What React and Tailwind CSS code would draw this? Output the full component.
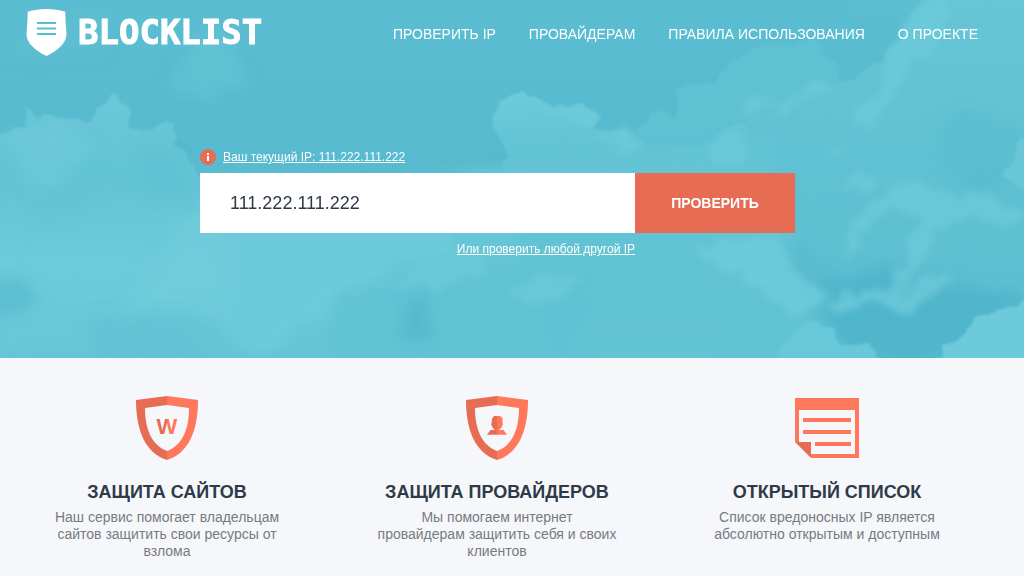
import React from "react";

const navLinks = [
  { label: "ПРОВЕРИТЬ IP", href: "#check" },
  { label: "ПРОВАЙДЕРАМ", href: "#providers" },
  { label: "ПРАВИЛА ИСПОЛЬЗОВАНИЯ", href: "#rules" },
  { label: "О ПРОЕКТЕ", href: "#about" },
];

function Clouds() {
  return (
    <svg
      className="col-start-1 row-start-1 w-full h-full"
      viewBox="0 0 1024 358"
      preserveAspectRatio="xMidYMid slice"
      aria-hidden="true"
    >
      <defs>
        <filter id="puff" x="-10%" y="-10%" width="120%" height="120%">
          <feTurbulence type="fractalNoise" baseFrequency="0.06" numOctaves="4" seed="4" />
          <feDisplacementMap in="SourceGraphic" scale="13" xChannelSelector="R" yChannelSelector="G" />
          <feGaussianBlur stdDeviation="1" />
        </filter>
        <filter id="wisp" x="-20%" y="-20%" width="140%" height="140%">
          <feTurbulence type="fractalNoise" baseFrequency="0.06" numOctaves="4" seed="7" />
          <feDisplacementMap in="SourceGraphic" scale="22" xChannelSelector="R" yChannelSelector="G" />
          <feGaussianBlur stdDeviation="3" />
        </filter>
        <filter id="haze" x="-40%" y="-40%" width="180%" height="180%">
          <feTurbulence type="fractalNoise" baseFrequency="0.03" numOctaves="3" seed="9" />
          <feDisplacementMap in="SourceGraphic" scale="30" xChannelSelector="R" yChannelSelector="G" />
          <feGaussianBlur stdDeviation="7" />
        </filter>
        <linearGradient id="sky" x1="0" y1="0" x2="0" y2="1">
          <stop offset="0" stopColor="#5bbdd1" />
          <stop offset="0.4" stopColor="#57bace" />
          <stop offset="1" stopColor="#5fc0d3" />
        </linearGradient>
        <linearGradient id="left" x1="0" y1="0" x2="0" y2="1">
          <stop offset="0" stopColor="#6ac7d8" />
          <stop offset="0.3" stopColor="#63c3d5" />
          <stop offset="0.6" stopColor="#6ecbdb" />
          <stop offset="1" stopColor="#64c4d6" />
        </linearGradient>
        <linearGradient id="mid" x1="0" y1="0" x2="0" y2="1">
          <stop offset="0" stopColor="#6fcbdb" />
          <stop offset="0.4" stopColor="#65c5d6" />
          <stop offset="1" stopColor="#60c0d3" />
        </linearGradient>
        <linearGradient id="right" x1="0" y1="0" x2="0" y2="1">
          <stop offset="0" stopColor="#67c5d6" />
          <stop offset="0.5" stopColor="#60c1d3" />
          <stop offset="1" stopColor="#5bbdd1" />
        </linearGradient>
      </defs>
      <rect width="1024" height="358" fill="url(#sky)" />

      <g filter="url(#haze)" fill="#66c4d5">
        <path d="M178 60 L200 32 L240 40 L246 80 L215 100 L180 98 Z" opacity="0.6" />
        <path d="M0 60 L40 20 L120 10 L100 50 Z" opacity="0.25" />
        <path d="M0 200 L120 160 L230 195 L360 225 L500 170 L560 380 L0 380 Z" fill="#6dcada" />
      </g>

      <path
        filter="url(#puff)"
        fill="#60c1d3"
        d="M630 145 L645 118 L662 110 L676 120 L675 90 L690 84 L718 82 L730 62 L756 48 L790 42 L815 40 L832 58 L842 80 L860 90 L830 190 L640 200 Z"
      />
      <path
        filter="url(#puff)"
        fill="url(#left)"
        d="M-10 140 L14 128 L28 126 L22 106 L38 118 L50 114 L66 120 L88 122 L98 106 L116 96 L130 106 L130 126 L146 132 L156 124 L170 126 L176 142 L190 156 L196 175 L230 200 L300 215 L310 380 L-10 380 Z"
      />
      <path
        filter="url(#puff)"
        fill="url(#right)"
        d="M745 130 L744 105 L758 94 L772 98 L782 106 L796 90 L816 78 L836 84 L862 74 L884 58 L898 42 L914 10 L930 -10 L1040 -10 L1040 380 L720 380 L690 180 Z"
      />
      <path
        filter="url(#puff)"
        fill="url(#mid)"
        d="M470 190 L500 170 L508 154 L496 140 L492 122 L498 102 L508 92 L526 90 L538 102 L560 108 L582 104 L600 116 L594 130 L622 130 L642 136 L655 162 L672 148 L696 148 L712 140 L728 126 L744 122 L760 150 L740 180 L560 195 Z"
      />

      <g filter="url(#haze)">
        <path d="M220 200 L500 170 L770 140 L790 240 L800 290 L850 380 L220 380 Z" fill="#64c4d5" opacity="0.8" />
        <path d="M200 205 L460 215 L430 270 L330 300 L240 370 L120 300 Z" fill="#6fccdb" opacity="0.8" />
        <path d="M8 130 L60 124 L90 150 L70 175 L20 190 Z" fill="#70ccdc" opacity="0.5" />
        <path d="M135 150 L175 150 L185 190 L150 200 Z" fill="#5dbfd2" opacity="0.5" />
        <path d="M40 180 L90 180 L80 220 L30 215 Z" fill="#62c2d4" opacity="0.6" />
        <path d="M-10 285 L25 285 L45 300 L10 315 L-10 312 Z" fill="#5abcd0" opacity="0.8" />
        <path d="M95 320 L180 310 L250 345 L300 370 L90 370 Z" fill="#60c0d3" opacity="0.6" />
        <path d="M330 305 L400 260 L520 260 L600 290 L570 370 L330 370 Z" fill="#61c1d3" opacity="0.6" />
        <path d="M408 302 L432 302 L430 345 L398 342 Z" fill="#53b7cc" opacity="0.9" />
        <path d="M785 240 L830 270 L825 290 L790 275 Z" fill="#58bace" opacity="0.8" />
        <path d="M960 110 L1024 130 L1010 180 L970 190 L930 150 Z" fill="#57bace" opacity="0.5" />
        <path d="M820 275 L900 270 L1024 300 L960 345 L920 370 L870 360 L825 320 Z" fill="#50b5cb" opacity="0.9" />
      </g>

      <g filter="url(#wisp)" fill="#70ccdc">
        <path d="M912 12 L935 -5 L950 12 L940 45 L915 62 L898 90 L870 128 L848 122 L880 90 L884 62 Z" opacity="0.55" />
        <path d="M742 118 L746 100 L758 94 L784 106 L804 88 L822 80 L834 90 L806 98 L788 116 L770 104 Z" opacity="0.6" />
        <path d="M530 106 L560 108 L582 104 L600 116 L592 132 L568 118 Z M592 136 L625 130 L645 145 L634 154 Z" opacity="0.6" />
        <path d="M710 145 L730 128 L744 130 L750 160 L720 168 Z" opacity="0.5" />
        <path d="M400 285 L420 260 L480 255 L490 272 L440 290 Z" opacity="0.5" />
        <path d="M512 290 L560 272 L588 276 L560 300 L530 312 Z" opacity="0.5" />
        <path d="M690 248 L730 238 L780 236 L790 265 L830 300 L790 312 L750 285 L715 265 Z" opacity="0.7" />
        <path d="M845 240 L852 222 L880 198 L905 180 L925 182 L945 196 L985 192 L1000 204 L1030 215 L1015 226 L960 218 L934 230 L918 268 L900 300 L888 290 L906 260 L918 216 L892 208 L868 225 L848 262 Z" opacity="0.6" />
        <path d="M845 172 L882 176 L866 190 L842 196 Z M830 148 L848 140 L846 154 L820 160 Z" opacity="0.5" />
        <path d="M830 302 L862 286 L905 294 L930 275 L952 278 L930 300 L906 316 L868 302 L836 310 Z" opacity="0.7" />
        <path d="M800 12 L912 -5 L1030 -5 L1030 24 L980 18 L950 20 Z" opacity="0.15" />
      </g>
      <g filter="url(#puff)">
        <path d="M1004 178 L1012 158 L1030 130 L1030 190 Z" fill="#68c6d7" />
        <path d="M780 345 L806 322 L832 328 L840 344 L875 348 L892 370 L770 370 Z" fill="#68c7d8" />
        <path d="M942 370 L946 346 L964 334 L978 316 L1004 306 L1035 300 L1035 370 Z" fill="#6dcada" />
      </g>
    </svg>
  );
}

function Logo() {
  return (
    <a href="#home" className="flex items-center gap-[11px] text-white">
      <svg width="41" height="48" viewBox="0 0 41 48" aria-hidden="true">
        <path d="M20.500 0 C27 0 33.500 1 39.300 2.800 C39.300 12 40.200 19 40.500 25 C40.500 35 30 42.500 20.500 47 C11 42.500 .500 35 .500 25 C.800 19 1.700 12 1.700 2.800 C7.500 1 14 0 20.500 0 Z" fill="#fff" />
        <path d="M11 14h19M11 19.500h19M11 25h19" stroke="#5bbdd1" strokeWidth="2" />
      </svg>
      <span className="font-['DejaVu_Sans_Mono',monospace] font-bold text-[34px] leading-[46px] pb-0.5 [-webkit-text-stroke:1px_white]">BLOCKLIST</span>
    </a>
  );
}

function Shield({ children }) {
  return (
    <svg width="62" height="66" viewBox="0 0 62 66" aria-hidden="true">
      <defs>
        <linearGradient id="split" gradientUnits="userSpaceOnUse" x1="0" y1="0" x2="62" y2="0">
          <stop offset="0.5" stopColor="#e66c53" />
          <stop offset="0.5" stopColor="#ff785c" />
        </linearGradient>
      </defs>
      <path d="M31 0 L62 4 C62 34 53 57 31 64 C9 57 0 34 0 4 Z" fill="url(#split)" />
      <path d="M31 9 L53 12 C53 32 47 49 31 55 C15 49 9 32 9 12 Z" fill="#f5f7fb" />
      {children}
    </svg>
  );
}

function SiteIcon() {
  return (
    <Shield>
      <text x="31" y="38" textAnchor="middle" fill="url(#split)" className="font-bold text-[22px]">W</text>
    </Shield>
  );
}

function ProviderIcon() {
  return (
    <Shield>
      <path d="M28 20h6l2.500 2v5l.5 1-1.500 3.500L33 34h4.500l3.500 4.700H21L24.500 34H29l-2.500-2.500L25 28l.8-1v-4Z" fill="url(#split)" />
    </Shield>
  );
}

function ListIcon() {
  return (
    <svg width="64" height="66" viewBox="0 0 64 66" aria-hidden="true">
      <path d="M0 2h64v60H16v-4h44V14H4v32H0Z" fill="#ff785c" />
      <path d="M8 22h48v4H8ZM8 34h48v4H8ZM20 46h36v4H20Z" fill="#ff785c" />
      <path d="M0 46h16v16Z" fill="#e66c53" />
    </svg>
  );
}

const features = [
  { icon: SiteIcon, title: "ЗАЩИТА САЙТОВ", text: "Наш сервис помогает владельцам сайтов защитить свои ресурсы от взлома" },
  { icon: ProviderIcon, title: "ЗАЩИТА ПРОВАЙДЕРОВ", text: "Мы помогаем интернет провайдерам защитить себя и своих клиентов" },
  { icon: ListIcon, title: "ОТКРЫТЫЙ СПИСОК", text: "Список вредоносных IP является абсолютно открытым и доступным" },
];

function CheckForm() {
  return (
    <form className="w-[595px] max-w-full mx-auto text-xs text-white" onSubmit={(e) => e.preventDefault()}>
      <div className="flex items-center gap-[7px]">
        <svg width="16" height="16" viewBox="0 0 16 16" aria-hidden="true">
          <circle cx="8" cy="8" r="8" fill="#e66c53" />
          <path d="M7 4h2v2H7ZM7 7h2v5H7Z" fill="#fff" />
        </svg>
        <a href="#current" className="underline">Ваш текущий IP: 111.222.111.222</a>
      </div>
      <div className="flex mt-2">
        <input
          type="text"
          aria-label="IP"
          defaultValue="111.222.111.222"
          className="flex-1 min-w-0 h-15 px-[30px] bg-white text-lg text-[#2f3a47] outline-none"
        />
        <button type="submit" className="w-40 h-15 bg-[#e66c53] text-sm font-bold">
          ПРОВЕРИТЬ
        </button>
      </div>
      <div className="mt-2 pr-40 text-right">
        <a href="#other" className="underline">Или проверить любой другой IP</a>
      </div>
    </form>
  );
}

export default function App() {
  return (
    <div className="min-h-screen bg-[#f5f7fb] font-['Liberation_Sans',Arial,sans-serif]">
      <div className="grid overflow-hidden">
        <Clouds />
        <div className="col-start-1 row-start-1 z-10 pr-[29px]">
          <header className="flex items-center justify-between pt-[9px] pl-[26px] pr-[17px]">
            <Logo />
            <nav className="flex gap-[33px] pt-0.5 text-sm text-white">
              {navLinks.map((link) => (
                <a key={link.href} href={link.href}>{link.label}</a>
              ))}
            </nav>
          </header>
          <div className="pt-[92px] pb-[98px]">
            <CheckForm />
          </div>
        </div>
      </div>

      <main className="grid grid-cols-3 pt-[38px] pl-0.5 pr-8 text-center">
        {features.map(({ icon: Icon, title, text }) => (
          <section key={title} className="flex flex-col items-center px-[45px]">
            <Icon />
            <h2 className="mt-[18px] text-lg leading-6 font-bold whitespace-nowrap text-[#2f3a47]">{title}</h2>
            <p className="mt-[5px] text-sm leading-[17px] text-[#777b80]">{text}</p>
          </section>
        ))}
      </main>
    </div>
  );
}
